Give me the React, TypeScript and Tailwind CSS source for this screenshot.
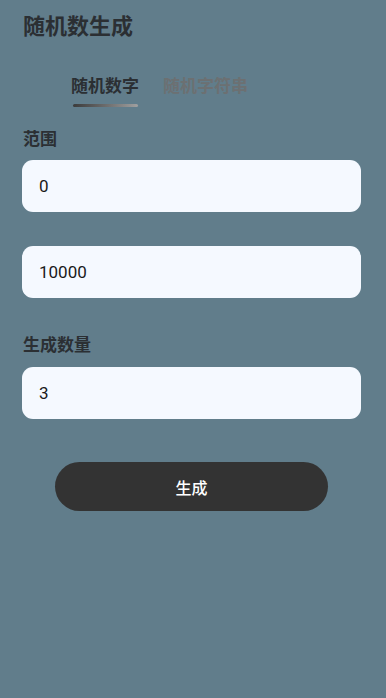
import { useState } from "react";

const cjk = "font-['Noto_Sans_CJK_SC',sans-serif]";

export default function App() {
  const [tab, setTab] = useState(0);
  const [min, setMin] = useState("0");
  const [max, setMax] = useState("10000");
  const [count, setCount] = useState("3");

  return (
    <div className={`min-h-screen w-full bg-[#617d8b] ${cjk}`}>
      <h1 className="pl-[23px] pt-[9px] text-[22px] font-bold leading-[30px] text-[#2b2f33]">随机数生成</h1>

      {/* tabs */}
      <div className="mt-[34px] flex gap-[24px] pl-[71px]">
        {["随机数字", "随机字符串"].map((t, i) => (
          <button key={t} onClick={() => setTab(i)} className="flex flex-col items-center">
            <span
              className={
                "text-[17px] font-bold leading-[24px] " + (tab === i ? "text-[#2b2f33]" : "text-[#6c7072]")
              }
            >
              {t}
            </span>
            <span
              className={
                "mt-[7px] h-[3px] w-[65px] rounded-full " +
                (tab === i ? "bg-gradient-to-r from-[#3c3c3c] to-[#a0a0a0]" : "bg-transparent")
              }
            />
          </button>
        ))}
      </div>

      <div className="px-[22px] pr-[25px]">
        <Label className="mt-[19px]">范围</Label>
        <Field value={min} onChange={setMin} className="mt-[10px]" />
        <Field value={max} onChange={setMax} className="mt-[34px]" />

        <Label className="mt-[34px]">生成数量</Label>
        <Field value={count} onChange={setCount} className="mt-[11px]" />

        <div className="mt-[43px] flex justify-center">
          <button className="h-[49px] w-[273px] rounded-full bg-[#333333] text-[16px] font-medium text-white">
            生成
          </button>
        </div>
      </div>
    </div>
  );
}

function Label({ children, className = "" }: { children: React.ReactNode; className?: string }) {
  return (
    <p className={`pl-[1px] text-[17px] font-bold leading-[24px] text-[#2b2f33] ${className}`}>{children}</p>
  );
}

function Field({
  value,
  onChange,
  className = "",
}: {
  value: string;
  onChange: (v: string) => void;
  className?: string;
}) {
  return (
    <input
      value={value}
      onChange={(e) => onChange(e.target.value)}
      className={`block h-[52px] w-full rounded-[11px] bg-[#f5f9ff] px-[17px] font-['Roboto',sans-serif] text-[17px] text-[#1a1a1a] outline-none ${className}`}
    />
  );
}
